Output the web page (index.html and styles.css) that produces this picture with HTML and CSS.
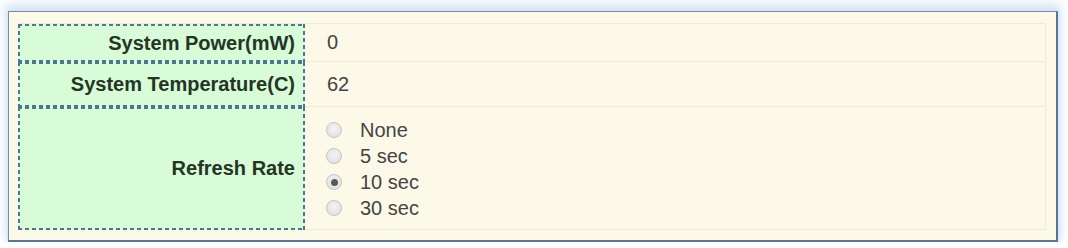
FILE: index.html
```html
<!DOCTYPE html>
<html>
<head>
<meta charset="utf-8">
<link rel="stylesheet" href="styles.css">
</head>
<body>
<div class="panel">
  <div class="table">
    <div class="label row1">System Power(mW)</div>
    <div class="value row1">0</div>
    <div class="label row2">System Temperature(C)</div>
    <div class="value row2">62</div>
    <div class="label row3">Refresh Rate</div>
    <div class="value row3">
      <div class="radios">
        <label class="opt"><span class="radio"></span><span class="txt">None</span></label>
        <label class="opt"><span class="radio"></span><span class="txt">5 sec</span></label>
        <label class="opt"><span class="radio checked"></span><span class="txt">10 sec</span></label>
        <label class="opt"><span class="radio"></span><span class="txt">30 sec</span></label>
      </div>
    </div>
  </div>
</div>
</body>
</html>
```
FILE: styles.css
```css
html, body {
  margin: 0;
  padding: 0;
  background: #ffffff;
}
body {
  font-family: "Liberation Sans", Arial, sans-serif;
  font-size: 20px;
  color: #3a3a3a;
}
.panel {
  margin: 11px 0 0 8px;
  width: 1050px;
  height: 231px;
  box-sizing: border-box;
  border: 1px solid #6d8db0;
  border-right: 2px solid #55759a;
  border-bottom: 2px solid #55759a;
  background: #fdf9e9;
  box-shadow: 0 -4px 9px 3px #d3e4f4, 0 2px 3px #c6d6e8;
  padding: 11px 10px 0 9px;
}
.table {
  display: grid;
  grid-template-columns: 287px 1fr;
  grid-template-rows: 38px 45px 123px;
  border-top: 1px solid #efe9d6;
  border-right: 1px solid #efe9d6;
}
.label {
  background:
    repeating-linear-gradient(90deg, #4b7694 0 4px, transparent 4px 7px) top left / 100% 2px no-repeat,
    repeating-linear-gradient(90deg, #4b7694 0 4px, transparent 4px 7px) bottom left / 100% 2px no-repeat,
    repeating-linear-gradient(180deg, #4b7694 0 4px, transparent 4px 7px) top left / 2px 100% no-repeat,
    repeating-linear-gradient(180deg, #4b7694 0 4px, transparent 4px 7px) top right / 2px 100% no-repeat,
    #d8fbd8;
  font-weight: bold;
  color: #253525;
  display: flex;
  align-items: center;
  justify-content: flex-end;
  padding-right: 10px;
}
.value {
  display: flex;
  align-items: center;
  padding-left: 22px;
  border-bottom: 1px solid #efe9d6;
  color: #444444;
}
.radios {
  display: flex;
  flex-direction: column;
  gap: 5px;
  padding-top: 2px;
  margin-left: -2px;
}
.opt {
  display: flex;
  align-items: center;
  height: 21px;
}
.radio {
  width: 16px;
  height: 16px;
  box-sizing: border-box;
  border-radius: 50%;
  border: 1px solid #c4c4c4;
  background: radial-gradient(circle at 50% 40%, #f4f4f4 0%, #dcdcdc 100%);
  margin: 0 18px 0 1px;
  display: flex;
  align-items: center;
  justify-content: center;
}
.radio.checked::after {
  content: "";
  width: 7px;
  height: 7px;
  border-radius: 50%;
  background: #5a5a5a;
}
.txt {
  line-height: 21px;
}
```
